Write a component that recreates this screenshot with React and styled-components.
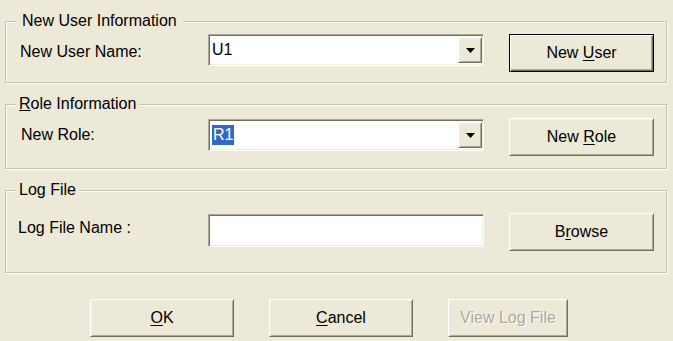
import React from "react";
import styled, { createGlobalStyle, css } from "styled-components";

const Global = createGlobalStyle`
  html, body { margin: 0; padding: 0; background: #ece9d8; }
  body { font-family: "Liberation Sans", Arial, sans-serif; font-size: 16px; color: #000; }
  * { box-sizing: border-box; }
`;

const Dialog = styled.div`
  width: 673px;
  height: 341px;
  padding: 21px 6px 0 5px;
  display: flex;
  flex-direction: column;
  gap: 21px;
  background: #ece9d8;
`;

const Group = styled.div`
  position: relative;
  height: ${(p) => p.$h}px;
  border: 1px solid #c3c0b0;
  box-shadow: inset 1px 1px 0 #fff, 1px 1px 0 #fff;
  padding: ${(p) => p.$pt}px 12px 0 14px;
`;

const Title = styled.span`
  position: absolute;
  top: -10px;
  left: ${(p) => p.$left}px;
  padding: 0 ${(p) => p.$pad}px;
  line-height: 18px;
  background: #ece9d8;
  white-space: nowrap;
`;

const Row = styled.div`
  display: grid;
  grid-template-columns: 163px 276px 145px;
  column-gap: 25px;
  align-items: start;
`;

const Label = styled.span`
  line-height: 18px;
  margin-top: ${(p) => p.$mt}px;
  margin-left: ${(p) => p.$ml || 0}px;
  white-space: nowrap;
`;

const sunken = css`
  border: 1px solid;
  border-color: #aca899 #fff #fff #aca899;
  box-shadow: inset 1px 1px 0 #716f64, inset -1px -1px 0 #f1efe2;
  background: #fff;
  padding: 1px;
`;

const Combo = styled.div`
  ${sunken};
  height: 32px;
  margin-top: ${(p) => p.$mt}px;
  display: flex;
  align-items: stretch;
`;

const ComboText = styled.div`
  flex: 1;
  display: flex;
  align-items: center;
  padding-left: 2px;
  line-height: 20px;
`;

const Selected = styled.span`
  background: #316ac5;
  color: #fff;
  padding: 0 1px;
  line-height: 20px;
`;

const raised = css`
  border: 1px solid;
  border-color: #fff #716f64 #716f64 #fff;
  box-shadow: inset 1px 1px 0 #f1efe2, inset -1px -1px 0 #aca899;
  background: #ece9d8;
`;

const DropButton = styled.div`
  ${raised};
  width: 24px;
  margin: 1px 0 1px 0;
  display: flex;
  align-items: center;
  justify-content: center;
`;

const TextInput = styled.div`
  ${sunken};
  height: 33px;
  margin-top: ${(p) => p.$mt}px;
`;

const Button = styled.button`
  ${raised};
  height: 38px;
  width: ${(p) => p.$w || 145}px;
  margin-top: 0;
  padding: 0;
  font-family: inherit;
  font-size: 16px;
  color: #000;
  display: flex;
  align-items: center;
  justify-content: center;
  ${(p) =>
    p.$default &&
    css`
      border: 1px solid #000;
      box-shadow: inset 1px 1px 0 #fff, inset -1px -1px 0 #716f64,
        inset -2px -2px 0 #aca899;
    `}
  ${(p) =>
    p.disabled &&
    css`
      color: #aca899;
      text-shadow: 1px 1px 0 #fff;
    `}
  u { text-decoration: underline; text-underline-offset: 2px; }
`;

const Footer = styled.div`
  display: flex;
  gap: 35px;
  padding-left: 85px;
  margin-top: 5px;
`;

const Arrow = () => (
  <svg width="9" height="5" viewBox="0 0 9 5">
    <path d="M0 0h9L4.5 5z" fill="#000" />
  </svg>
);

export default function App() {
  return (
    <>
      <Global />
      <Dialog>
        <Group $h={62} $pt={12}>
          <Title $left={10} $pad={6}>New User Information</Title>
          <Row>
            <Label $mt={9}>New User Name:</Label>
            <Combo $mt={0}>
              <ComboText>U1</ComboText>
              <DropButton>
                <Arrow />
              </DropButton>
            </Combo>
            <Button $default>
              New&nbsp;<u>U</u>ser
            </Button>
          </Row>
        </Group>

        <Group $h={65} $pt={13}>
          <Title $left={10} $pad={3}>
            <u>R</u>ole Information
          </Title>
          <Row>
            <Label $mt={8} $ml={1}>New Role:</Label>
            <Combo $mt={1}>
              <ComboText>
                <Selected>R1</Selected>
              </ComboText>
              <DropButton>
                <Arrow />
              </DropButton>
            </Combo>
            <Button>
              New&nbsp;<u>R</u>ole
            </Button>
          </Row>
        </Group>

        <Group $h={83} $pt={22}>
          <Title $left={10} $pad={3}>Log File</Title>
          <Row>
            <Label $mt={6} $ml={-2}>Log File Name :</Label>
            <TextInput $mt={1} />
            <Button>
              B<u>r</u>owse
            </Button>
          </Row>
        </Group>

        <Footer>
          <Button $w={144}>
            <u>O</u>K
          </Button>
          <Button $w={144}>
            <u>C</u>ancel
          </Button>
          <Button $w={120} disabled>
            View Log File
          </Button>
        </Footer>
      </Dialog>
    </>
  );
}
